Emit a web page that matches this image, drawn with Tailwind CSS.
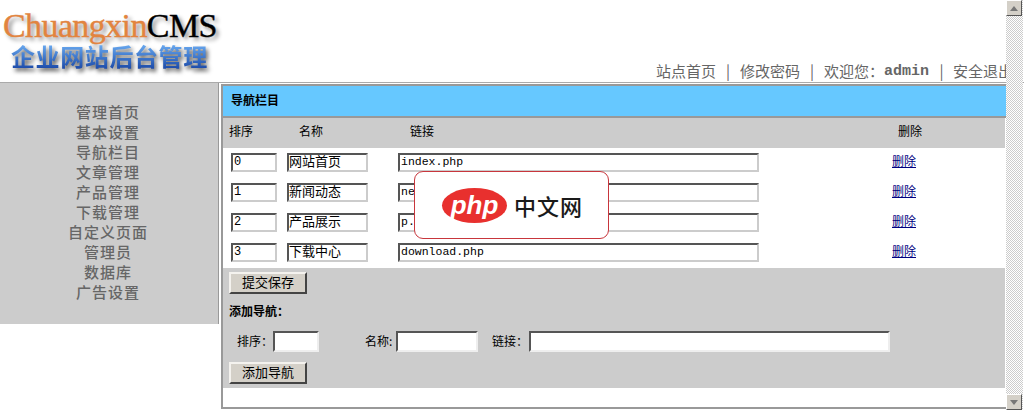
<!DOCTYPE html>
<html lang="zh-CN">

<head>
    <meta charset="UTF-8">
    <title>企业网站后台管理</title>
    <script src="https://cdn.jsdelivr.net/npm/@tailwindcss/browser@4"></script>
</head>

<body class="bg-white overflow-hidden font-['Noto_Sans_CJK_SC',sans-serif]">
    <div class="relative w-[1024px] h-[410px] overflow-hidden">

        <!-- HEADER -->
        <div class="h-[83px] border-b border-[#aaaaaa] flex justify-between items-start">
            <div class="pl-[3px] pt-[8px]">
                <div class="font-['Liberation_Serif',serif] text-[34px] h-[35px] leading-[35px] tracking-[-0.6px] [-webkit-text-stroke:0.4px_currentColor] [text-shadow:3px_3px_4px_#888]">
                    <span class="text-[#e2843f]">Chuangxin</span><span class="text-black">CMS</span>
                </div>
                <div class="ml-[8px] text-[24px] leading-[26px] tracking-[0.6px] font-bold text-transparent bg-clip-text bg-gradient-to-b from-[#6fb0f5] to-[#1c49a8] drop-shadow-[2px_3px_2px_#555] w-fit">
                    企业网站后台管理</div>
            </div>
            <div class="pr-[11px] pt-[61px] text-[15px] leading-[20px] text-[#666666] flex whitespace-nowrap">
                <a href="#">站点首页</a>
                <span class="w-[24px] text-center">|</span>
                <a href="#">修改密码</a>
                <span class="w-[24px] text-center">|</span>
                <span>欢迎您：</span>
                <span class="w-[46px] pt-[1px] font-['Liberation_Mono',monospace] font-bold text-[15px]">admin</span>
                <span class="w-[23px] text-center">|</span>
                <a href="#">安全退出</a>
            </div>
        </div>

        <div class="flex items-start">
            <!-- SIDEBAR -->
            <div class="w-[219px] h-[241px] bg-[#cccccc] border-r border-[#999999] pt-[19px] pr-[2px] text-center text-[15px] tracking-[1px] leading-[20px] font-medium text-[#666666]">
                <div>管理首页</div>
                <div>基本设置</div>
                <div>导航栏目</div>
                <div>文章管理</div>
                <div>产品管理</div>
                <div>下载管理</div>
                <div>自定义页面</div>
                <div>管理员</div>
                <div>数据库</div>
                <div>广告设置</div>
            </div>

            <!-- MAIN -->
            <div class="ml-[2px] mt-[1px] w-[785px] h-[325px] border-l-2 border-t-2 border-b-2 border-[#999999] text-[12px] text-black">
                <div class="h-[32px] bg-[#66c8ff] border-b-2 border-[#999999] pl-[8px] pb-[2px] font-bold flex items-center">导航栏目</div>

                <div class="h-[30px] mr-[1px] pb-[5px] bg-[#cccccc] flex items-center">
                    <span class="ml-[6px] w-[70px]">排序</span>
                    <span class="w-[111px]">名称</span>
                    <span class="w-[488px]">链接</span>
                    <span>删除</span>
                </div>

                <!-- ROWS -->
                <div class="h-[120px] bg-white">
                    <div class="h-[30px] flex items-center">
                        <input value="0" class="ml-[8px] mb-[1px] w-[46px] h-[19px] px-[1px] pb-[2px] border-2 border-t-[#555555] border-l-[#555555] border-r-[#cccccc] border-b-[#cccccc] font-['Liberation_Mono',monospace] text-[12px]">
                        <input value="网站首页" class="ml-[10px] mb-[1px] w-[81px] h-[19px] pb-[4px] border-2 border-t-[#555555] border-l-[#555555] border-r-[#cccccc] border-b-[#cccccc] text-[13px]">
                        <input value="index.php" class="ml-[30px] mb-[1px] w-[361px] h-[19px] px-[1px] pb-[2px] border-2 border-t-[#555555] border-l-[#555555] border-r-[#cccccc] border-b-[#cccccc] font-['Liberation_Mono',monospace] text-[11.5px]">
                        <a href="#" class="ml-[133px] mb-[4px] text-[#000080] underline">删除</a>
                    </div>
                    <div class="h-[30px] flex items-center">
                        <input value="1" class="ml-[8px] mb-[1px] w-[46px] h-[19px] px-[1px] pb-[2px] border-2 border-t-[#555555] border-l-[#555555] border-r-[#cccccc] border-b-[#cccccc] font-['Liberation_Mono',monospace] text-[12px]">
                        <input value="新闻动态" class="ml-[10px] mb-[1px] w-[81px] h-[19px] pb-[4px] border-2 border-t-[#555555] border-l-[#555555] border-r-[#cccccc] border-b-[#cccccc] text-[13px]">
                        <input value="news.php" class="ml-[30px] mb-[1px] w-[361px] h-[19px] px-[1px] pb-[2px] border-2 border-t-[#555555] border-l-[#555555] border-r-[#cccccc] border-b-[#cccccc] font-['Liberation_Mono',monospace] text-[11.5px]">
                        <a href="#" class="ml-[133px] mb-[4px] text-[#000080] underline">删除</a>
                    </div>
                    <div class="h-[30px] flex items-center">
                        <input value="2" class="ml-[8px] mb-[1px] w-[46px] h-[19px] px-[1px] pb-[2px] border-2 border-t-[#555555] border-l-[#555555] border-r-[#cccccc] border-b-[#cccccc] font-['Liberation_Mono',monospace] text-[12px]">
                        <input value="产品展示" class="ml-[10px] mb-[1px] w-[81px] h-[19px] pb-[4px] border-2 border-t-[#555555] border-l-[#555555] border-r-[#cccccc] border-b-[#cccccc] text-[13px]">
                        <input value="p.php" class="ml-[30px] mb-[1px] w-[361px] h-[19px] px-[1px] pb-[2px] border-2 border-t-[#555555] border-l-[#555555] border-r-[#cccccc] border-b-[#cccccc] font-['Liberation_Mono',monospace] text-[11.5px]">
                        <a href="#" class="ml-[133px] mb-[4px] text-[#000080] underline">删除</a>
                    </div>
                    <div class="h-[30px] flex items-center">
                        <input value="3" class="ml-[8px] mb-[1px] w-[46px] h-[19px] px-[1px] pb-[2px] border-2 border-t-[#555555] border-l-[#555555] border-r-[#cccccc] border-b-[#cccccc] font-['Liberation_Mono',monospace] text-[12px]">
                        <input value="下载中心" class="ml-[10px] mb-[1px] w-[81px] h-[19px] pb-[4px] border-2 border-t-[#555555] border-l-[#555555] border-r-[#cccccc] border-b-[#cccccc] text-[13px]">
                        <input value="download.php" class="ml-[30px] mb-[1px] w-[361px] h-[19px] px-[1px] pb-[2px] border-2 border-t-[#555555] border-l-[#555555] border-r-[#cccccc] border-b-[#cccccc] font-['Liberation_Mono',monospace] text-[11.5px]">
                        <a href="#" class="ml-[133px] mb-[4px] text-[#000080] underline">删除</a>
                    </div>
                </div>

                <!-- ADD FORM -->
                <div class="h-[120px] mr-[1px] bg-[#cccccc] pl-[6px] pt-[4px]">
                    <button class="block w-[78px] h-[22px] pb-[2px] bg-[#d4d0c8] border-2 border-t-[#f4f2ee] border-l-[#f4f2ee] border-r-[#444444] border-b-[#444444] text-[13px] leading-[16px]">提交保存</button>
                    <div class="mt-[8px] h-[18px] leading-[18px] font-bold">添加导航：</div>
                    <div class="mt-[11px] h-[21px] flex items-center">
                        <span class="ml-[8px] w-[36px] pb-[2px]">排序：</span>
                        <input class="w-[46px] h-[21px] bg-white border-2 border-t-[#555555] border-l-[#555555] border-r-[#eeeeee] border-b-[#eeeeee]">
                        <span class="ml-[46px] w-[31px] pb-[2px]">名称:</span>
                        <input class="w-[82px] h-[21px] bg-white border-2 border-t-[#555555] border-l-[#555555] border-r-[#eeeeee] border-b-[#eeeeee]">
                        <span class="ml-[14px] w-[37px] pb-[2px]">链接：</span>
                        <input class="w-[361px] h-[21px] bg-white border-2 border-t-[#555555] border-l-[#555555] border-r-[#eeeeee] border-b-[#eeeeee]">
                    </div>
                    <button class="block mt-[10px] w-[78px] h-[22px] pb-[2px] bg-[#d4d0c8] border-2 border-t-[#f4f2ee] border-l-[#f4f2ee] border-r-[#444444] border-b-[#444444] text-[13px] leading-[16px]">添加导航</button>
                </div>
            </div>
        </div>

        <!-- WATERMARK -->
        <div class="absolute left-[414px] top-[171px] w-[195px] h-[68px] bg-white border border-[#c8363c] rounded-[9px] flex items-center">
            <div class="ml-[27px] w-[65px] h-[35px] rounded-[50%] bg-[#e8302e] flex items-center justify-center font-['Liberation_Sans',sans-serif] italic font-bold text-[26px] leading-none text-white">php</div>
            <div class="ml-[7px] text-[22px] leading-none font-medium tracking-[1px] text-[#1a1a1a] whitespace-nowrap">中文网</div>
        </div>

        <!-- SCROLLBAR -->
        <div class="absolute left-[1006px] top-0 w-[17px] h-[410px] bg-[repeating-conic-gradient(#ffffff_0_25%,#cccccc_0_50%)] bg-[length:2px_2px] flex flex-col justify-between">
            <div class="w-[16px] h-[16px] bg-[#d4d0c8] border border-t-white border-l-white border-r-[#555555] border-b-[#555555] flex items-center justify-center">
                <svg width="8" height="5" viewBox="0 0 8 5"><polygon points="4,0 8,5 0,5" fill="#777777"/></svg>
            </div>
            <div class="w-[16px] h-[16px] bg-[#d4d0c8] border border-t-white border-l-white border-r-[#555555] border-b-[#555555] flex items-center justify-center">
                <svg width="8" height="5" viewBox="0 0 8 5"><polygon points="0,0 8,0 4,5" fill="#777777"/></svg>
            </div>
        </div>
    </div>
</body>

</html>
